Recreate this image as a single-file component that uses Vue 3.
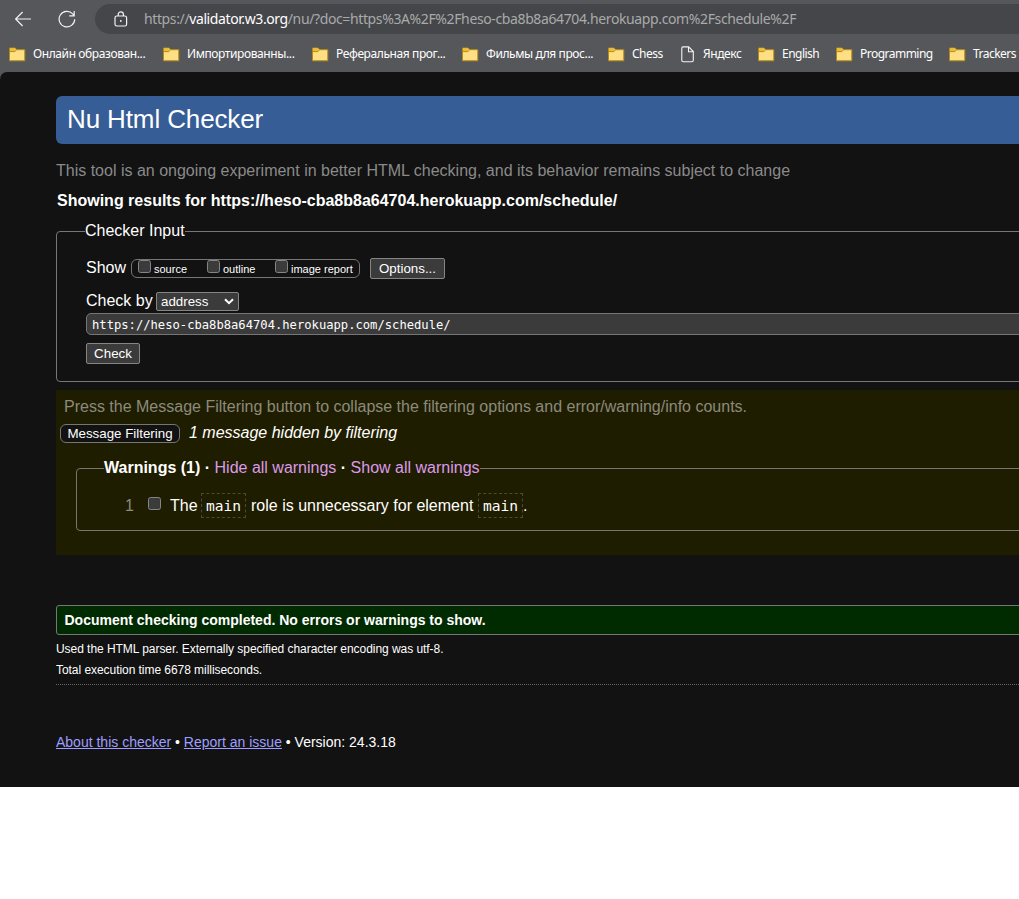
<script setup>
const bookmarks = [
  { label: 'Онлайн образован...', kind: 'folder', lang: 'ru' },
  { label: 'Импортированны...', kind: 'folder', lang: 'ru' },
  { label: 'Реферальная прог...', kind: 'folder', lang: 'ru' },
  { label: 'Фильмы для прос...', kind: 'folder', lang: 'ru' },
  { label: 'Chess', kind: 'folder', lang: 'en' },
  { label: 'Яндекс', kind: 'file', lang: 'ru' },
  { label: 'English', kind: 'folder', lang: 'en' },
  { label: 'Programming', kind: 'folder', lang: 'en' },
  { label: 'Trackers', kind: 'folder', lang: 'en' },
]
</script>

<template>
  <div class="window">
    <header class="chrome">
      <div class="toolbar">
        <svg class="back" width="18" height="16" viewBox="0 0 18 16" fill="none" stroke="#f2f2f3" stroke-width="1.2">
          <path d="M16 8H0.8M7.6 1L0.6 8l7 7" />
        </svg>
        <svg class="reload" width="18" height="18" viewBox="0 0 18 18" fill="none" stroke="#f2f2f3" stroke-width="1.2">
          <path d="M16.7 9.2a7.8 7.8 0 1 1-2-5.3L16 5.4M16.2 1v4.8h-5" />
        </svg>
        <div class="omnibox">
          <svg class="lock" width="14" height="16" viewBox="0 0 14 16" fill="none" stroke="#f2f2f3" stroke-width="1.2">
            <rect x="1" y="5" width="11.6" height="10" rx="1.8" />
            <path d="M4.2 5V3.4a2.6 2.6 0 0 1 5.2 0V5" />
            <circle cx="6.8" cy="10" r="0.9" fill="#f2f2f3" stroke="none" />
          </svg>
          <span class="url">https://<b>validator.w3.org</b>/nu/?doc=https%3A%2F%2Fheso-cba8b8a64704.herokuapp.com%2Fschedule%2F</span>
        </div>
      </div>
      <nav class="bookmarks">
        <a v-for="b in bookmarks" :key="b.label" class="bookmark" :class="[b.lang, b.kind]">
          <svg v-if="b.kind === 'folder'" width="17" height="15" viewBox="0 0 17 15">
            <path d="M0.5 1H6.2L7.7 2.7H15.8V13.8H0.5Z" fill="#ffdf83" stroke="#b18a1b" />
            <path d="M1 1.5H6L7.2 3L5.6 4.4H1Z" fill="#efbd35" />
            <path d="M1 4.6H5.7L7.6 2.9" fill="none" stroke="#b18a1b" />
          </svg>
          <svg v-else width="14" height="17" viewBox="0 0 14 17" fill="none" stroke="#f4f4f4" stroke-width="1.1">
            <path d="M2 0.9H7.7L12.3 5.5V14.3Q12.3 15.8 10.8 15.8H2.2Q0.8 15.8 0.8 14.3V2.3Q0.8 0.9 2 0.9ZM7.5 1V5.7H12.3" />
          </svg>
          <span>{{ b.label }}</span>
        </a>
      </nav>
    </header>

    <main class="page">
      <h1>Nu Html Checker</h1>
      <p class="tagline">This tool is an ongoing experiment in better HTML checking, and its behavior remains subject to change</p>
      <h2>Showing results for https://heso-cba8b8a64704.herokuapp.com/schedule/</h2>

      <fieldset class="input-set">
        <legend>Checker Input</legend>
        <div class="show-row">
          <span class="show">Show</span>
          <div class="extras">
            <label class="e1"><i class="box"></i><span>source</span></label>
            <label class="e2"><i class="box"></i><span>outline</span></label>
            <label class="e3"><i class="box"></i><span>image report</span></label>
          </div>
          <button class="options">Options...</button>
        </div>
        <div class="by-row">
          <span>Check by</span>
          <div class="select">
            <span>address</span>
            <svg width="10" height="7" viewBox="0 0 10 7" fill="none" stroke="#fff" stroke-width="2"><path d="M1 1.2l4 4 4-4" /></svg>
          </div>
        </div>
        <div class="address">https://heso-cba8b8a64704.herokuapp.com/schedule/</div>
        <button class="check">Check</button>
      </fieldset>

      <section class="filters">
        <p class="hint">Press the Message Filtering button to collapse the filtering options and error/warning/info counts.</p>
        <div class="filter-row">
          <button class="filtering">Message Filtering</button>
          <em>1 message hidden by filtering</em>
        </div>
        <fieldset class="warn-set">
          <legend><b>Warnings (1) ·</b> <a>Hide all warnings</a> <b>·</b> <a>Show all warnings</a></legend>
          <div class="warning">
            <span class="num">1</span><i class="box"></i>
            <span class="msg">The</span><code>main</code><span class="mid">role is unnecessary for element</span><code>main</code><span>.</span>
          </div>
        </fieldset>
      </section>

      <p class="success">Document checking completed. No errors or warnings to show.</p>
      <p class="detail">Used the HTML parser. Externally specified character encoding was utf-8.</p>
      <p class="detail">Total execution time 6678 milliseconds.</p>
      <hr />
      <footer><a>About this checker</a> • <a>Report an issue</a> • Version: 24.3.18</footer>
    </main>
  </div>
</template>

<style>
body { background: #fff; }
</style>

<style scoped>
* { box-sizing: border-box; }
.window { width: 1019px; height: 899px; overflow: hidden; background: #fff; white-space: nowrap; }
.chrome { height: 78px; background: #56575b; color: #fff; font-family: "Noto Sans", "Open Sans", sans-serif; }
.toolbar { height: 38px; display: flex; align-items: center; padding-left: 15px; }
.back { margin-right: 25px; flex: none; }
.reload { margin-right: 19px; flex: none; }
.omnibox { flex: 1; height: 30px; border-radius: 15px 0 0 15px; background: #454649; display: flex; align-items: center; padding-left: 19px; }
.lock { margin-right: 16px; flex: none; }
.url { font-size: 14px; color: #a9aaab; letter-spacing: -0.38px; line-height: 30px; }
.url b { font-weight: 400; color: #fff; letter-spacing: -0.4px; }
.bookmarks { height: 32px; padding-left: 9px; display: grid; align-items: center; grid-template-columns: 154px 149px 150px 146px 73px 77px 78px 113px 70px; }
.bookmark { display: flex; align-items: center; gap: 7px; font-size: 12px; line-height: 20px; }
.bookmark.ru { letter-spacing: -0.4px; }
.bookmark.en { letter-spacing: -0.52px; }
.bookmark.file { gap: 8px; }
.bookmark svg { flex: none; }

.page { position: relative; height: 715px; margin-top: -6px; padding: 24px 0 0 56px; background: #121212; border-top-left-radius: 7px; color: #fff; font: 16px "Liberation Sans", Arial, sans-serif; overflow: hidden; }
h1, h2, p, fieldset, legend, button { margin: 0; padding: 0; }
h1 { height: 48px; padding-left: 11px; line-height: 46px; background: #365d95; border-radius: 6px 0 0 6px; font-size: 26px; font-weight: 400; letter-spacing: -0.12px; }
.tagline { margin-top: 17px; line-height: 20px; color: #8a8a8a; }
h2 { margin-top: 10px; padding-left: 1px; font-size: 16px; line-height: 20px; }
fieldset { min-width: 0; border: 1px solid #767676; border-radius: 4px; }
button { background: #3b3b3b; border: 1px solid #858585; border-radius: 2px; color: #fff; font: 13.33px "Liberation Sans", Arial, sans-serif; display: block; }
.box { flex: none; width: 13px; height: 13px; border: 1px solid #858585; border-radius: 2.5px; background: #3b3b3b; }
.input-set { margin: 10px -20px 0 0; height: 161px; padding: 0 0 0 29px; }
.input-set legend { margin-left: -1px; line-height: 20px; }
.show-row { margin-top: 17px; height: 21px; display: flex; align-items: center; }
.show { width: 45px; line-height: 20px; padding-bottom: 1px; }
.extras { width: 229px; height: 19px; margin-right: 10px; border: 1px solid #767676; border-radius: 6px; display: flex; padding-left: 6px; font-size: 11px; }
.extras label { display: flex; gap: 3px; }
.extras span { line-height: 19px; }
.e1 { width: 69px; }
.e2 { width: 68px; }
.options { width: 75px; height: 21px; }
.by-row { margin-top: 13px; height: 19px; display: flex; }
.by-row > span { width: 70px; line-height: 18px; }
.select { width: 83px; height: 19px; padding: 0 4px; display: flex; align-items: center; justify-content: space-between; border: 1px solid #858585; border-radius: 2px; background: #3b3b3b; font-size: 13.33px; }
.address { margin-top: 2px; height: 22px; padding-left: 5px; line-height: 22px; border: 1px solid #767676; border-radius: 5px; background: #3b3b3b; font-family: "DejaVu Sans Mono", monospace; font-size: 12.17px; }
.check { margin-top: 8px; width: 54px; height: 21px; }

.filters { margin-top: 8px; height: 165px; padding-top: 7px; background: #1f1d00; }
.hint { padding-left: 8px; line-height: 20px; color: #8c8a7d; }
.filter-row { margin: 7px 0 0 4px; height: 19px; display: flex; }
.filtering { width: 120px; height: 19px; margin-right: 9px; background: #121212; border-radius: 6px; border-color: #767676; }
em { line-height: 17px; }
.warn-set { margin: 15px -20px 0 20px; height: 73px; padding-left: 27px; }
.warn-set legend { line-height: 20px; }
.warn-set legend a { color: #da9bea; }
.warning { display: flex; height: 25px; margin-top: 15px; line-height: 25px; }
.num { width: 44px; padding-left: 21px; color: #8c8a7d; }
.warning .box { margin: 4px 9px 0 0; }
.msg { width: 31px; }
code { width: 45px; height: 25px; border: 1px dashed #4b4938; text-align: center; font-family: "DejaVu Sans Mono", monospace; font-size: 14.6px; line-height: 24px; }
.mid { width: 232px; padding-left: 5px; }

.success { height: 30px; margin: 50px -20px 4px 0; padding-left: 7.5px; line-height: 28px; border: 1px solid #767676; border-radius: 3px; background: #002a00; font-size: 14px; font-weight: 700; }
.detail { line-height: 21px; font-size: 12px; letter-spacing: -0.05px; }
hr { margin: 3px 0 0; border: 0; border-top: 1px dotted #666; }
footer { margin-top: 47px; font-size: 14px; line-height: 20px; }
footer a { color: #9e9eff; text-decoration: underline; }
</style>
